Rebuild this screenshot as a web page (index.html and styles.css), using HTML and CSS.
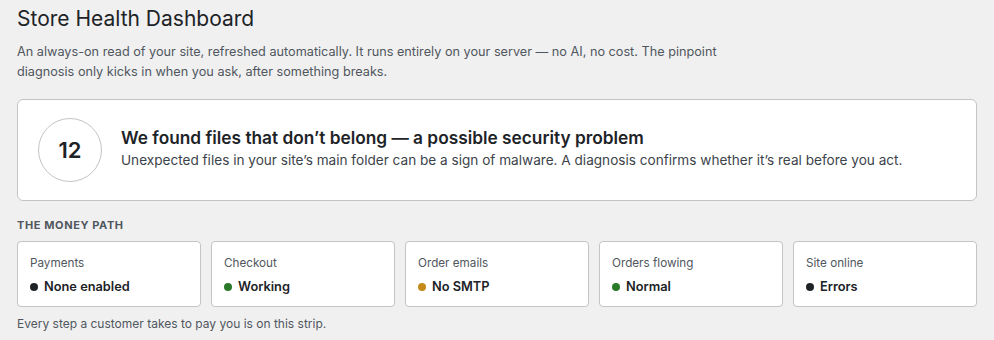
FILE: index.html
```html
<!DOCTYPE html>
<html lang="en">
<head>
<meta charset="utf-8">
<title>Store Health Dashboard</title>
<link rel="stylesheet" href="styles.css">
</head>
<body>
<main class="page">
  <h1 class="title">Store Health Dashboard</h1>
  <p class="intro">An always-on read of your site, refreshed automatically. It runs entirely on your server — no AI, no cost. The pinpoint<br>diagnosis only kicks in when you ask, after something breaks.</p>

  <section class="alert">
    <div class="score">12</div>
    <div class="alert-text">
      <h2 class="alert-title">We found files that don’t belong — a possible security problem</h2>
      <p class="alert-desc">Unexpected files in your site’s main folder can be a sign of malware. A diagnosis confirms whether it’s real before you act.</p>
    </div>
  </section>

  <h3 class="section-label">THE MONEY PATH</h3>
  <div class="strip">
    <div class="step">
      <div class="step-label">Payments</div>
      <div class="step-value"><span class="dot dot-dark"></span>None enabled</div>
    </div>
    <div class="step">
      <div class="step-label">Checkout</div>
      <div class="step-value"><span class="dot dot-green"></span>Working</div>
    </div>
    <div class="step">
      <div class="step-label">Order emails</div>
      <div class="step-value"><span class="dot dot-amber"></span>No SMTP</div>
    </div>
    <div class="step">
      <div class="step-label">Orders flowing</div>
      <div class="step-value"><span class="dot dot-green"></span>Normal</div>
    </div>
    <div class="step">
      <div class="step-label">Site online</div>
      <div class="step-value"><span class="dot dot-dark"></span>Errors</div>
    </div>
  </div>
  <p class="strip-note">Every step a customer takes to pay you is on this strip.</p>
</main>
</body>
</html>
```

FILE: styles.css
```css
* { box-sizing: border-box; }
html, body {
  margin: 0;
  padding: 0;
  background: #f0f0f1;
}
body {
  font-family: Inter, "Noto Sans", "Liberation Sans", sans-serif;
  color: #1d2327;
}
.page {
  padding: 5px 17px 0 17px;
}
.title {
  margin: 0;
  font-size: 21px;
  line-height: 28px;
  font-weight: 400;
  color: #1d2327;
}
.intro {
  margin: 9px 0 0 0;
  font-size: 12.7px;
  line-height: 20px;
  color: #50575e;
}
.alert {
  margin-top: 17px;
  background: #fff;
  border: 1px solid #c3c4c7;
  border-radius: 6px;
  height: 102px;
  padding: 0 20px;
  display: flex;
  align-items: center;
  gap: 19px;
}
.score {
  width: 64px;
  height: 64px;
  border: 1px solid #c3c4c7;
  border-radius: 50%;
  display: flex;
  align-items: center;
  justify-content: center;
  font-size: 22px;
  font-weight: 600;
  color: #1d2327;
  flex: none;
}
.alert-text {
  padding-bottom: 3px;
}
.alert-title {
  margin: 0;
  font-size: 17.3px;
  line-height: 22px;
  font-weight: 600;
  color: #1d2327;
}
.alert-desc {
  margin: 2px 0 0 0;
  font-size: 13.6px;
  line-height: 19px;
  color: #3c434a;
}
.section-label {
  margin: 17px 0 0 0;
  font-size: 11px;
  line-height: 14px;
  font-weight: 700;
  letter-spacing: 0.6px;
  color: #50575e;
}
.strip {
  margin-top: 9px;
  display: grid;
  grid-template-columns: repeat(5, 1fr);
  gap: 10px;
}
.step {
  background: #fff;
  border: 1px solid #c3c4c7;
  border-radius: 4px;
  height: 66px;
  padding: 13px 12px 0 12px;
}
.step-label {
  font-size: 11.7px;
  line-height: 16px;
  color: #50575e;
}
.step-value {
  margin-top: 8px;
  font-size: 12.8px;
  line-height: 16px;
  font-weight: 600;
  color: #1d2327;
  display: flex;
  align-items: center;
  gap: 6px;
}
.dot {
  width: 8px;
  height: 8px;
  border-radius: 50%;
  flex: none;
}
.dot-dark { background: #1d2327; }
.dot-green { background: #2a7a2a; }
.dot-amber { background: #c48a1a; }
.strip-note {
  margin: 9px 0 0 0;
  font-size: 12px;
  line-height: 16px;
  color: #50575e;
}
```
